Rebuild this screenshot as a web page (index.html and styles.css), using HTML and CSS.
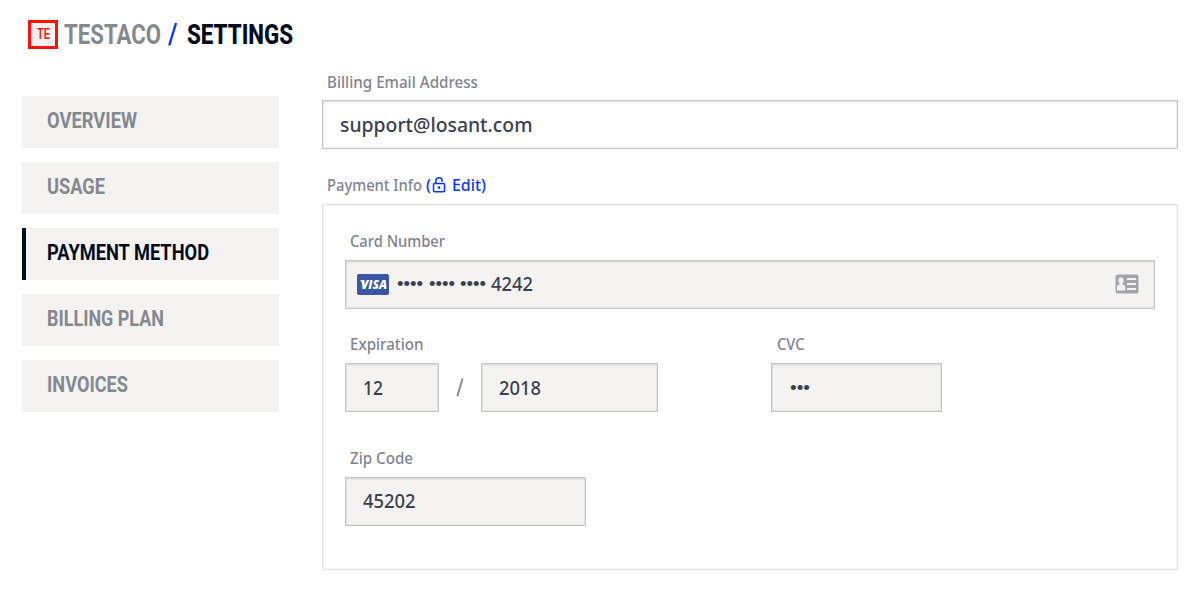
FILE: index.html
```html
<!DOCTYPE html>
<html lang="en">
<head>
<meta charset="utf-8">
<title>Testaco / Settings</title>
<link rel="stylesheet" href="styles.css">
</head>
<body>
<header class="title">
  <span class="logo"><span class="fit" data-w="13">TE</span></span>
  <span class="org"><span class="fit" data-w="97">TESTACO</span></span>
  <svg class="slash" width="10" height="26" viewBox="0 0 10 26"><path d="M1.2 24.5L8 2" stroke="#0a36ff" stroke-width="2.4"/></svg>
  <span class="page"><span class="fit" data-w="106">SETTINGS</span></span>
</header>
<div class="layout">
  <nav class="menu">
    <a class="item"><span class="fit" data-w="90">OVERVIEW</span></a>
    <a class="item"><span class="fit" data-w="58">USAGE</span></a>
    <a class="item active"><span class="fit" data-w="162">PAYMENT METHOD</span></a>
    <a class="item"><span class="fit" data-w="117">BILLING PLAN</span></a>
    <a class="item"><span class="fit" data-w="81">INVOICES</span></a>
  </nav>
  <main class="form">
    <div class="label"><span class="fit" data-w="151">Billing Email Address</span></div>
    <div class="input email"><span class="fit" data-w="192.5">support@losant.com</span></div>
    <div class="label info"><span class="fit" data-w="95">Payment Info</span><span class="edit"><span class="fit" data-w="5">(</span><svg class="lock" width="14" height="16" viewBox="0 0 14 16" fill="none" stroke="#0a36ff" stroke-width="1.5"><rect x="1.5" y="6.5" width="11" height="8.3" rx="1"/><path d="M3.8 6.5V4a3.2 3.2 0 0 1 6.4 0v.8"/><circle cx="7" cy="10.6" r="1.3" fill="#0a36ff" stroke="none"/></svg><span class="fit" data-w="34">Edit)</span></span></div>
    <section class="panel">
      <div class="label"><span class="fit" data-w="95">Card Number</span></div>
      <div class="input off card">
        <svg class="visa" width="32" height="21" viewBox="0 0 32 21"><rect width="32" height="21" rx="2" fill="#3957a5"/><path d="M3 6.2h3.2l1 1.2.3 4.6z" fill="#fff"/><text x="4" y="15.3" textLength="26" lengthAdjust="spacingAndGlyphs" class="visa-text">VISA</text></svg>
        <span class="dots"><span class="fit" data-w="26">••••</span><span class="fit" data-w="26">••••</span><span class="fit" data-w="26">••••</span></span>
        <span class="fit" data-w="42">4242</span>
        <svg class="id" width="24" height="20" viewBox="0 0 24 20"><rect x=".5" y=".5" width="23" height="19" rx="2.5" fill="#a1a5ab"/><g fill="#f4f3f1"><ellipse cx="6.1" cy="6.6" rx="2.6" ry="3.1"/><path d="M4.8 8h2.6v2.2c1.7.5 2.8 1.4 2.8 3v3.3H2v-3.3c0-1.6 1.1-2.5 2.8-3z"/><rect x="12" y="4" width="9" height="2"/><rect x="12" y="9" width="9" height="2"/><rect x="12" y="14" width="9" height="2"/></g></svg>
      </div>
      <div class="row">
        <div class="expiration">
          <div class="label"><span class="fit" data-w="73.5">Expiration</span></div>
          <div class="pair">
            <div class="input off month"><span class="fit" data-w="20">12</span></div>
            <svg width="8" height="22" viewBox="0 0 8 22"><path d="M1.3 19.3L6.6 1.4" stroke="#7f858e" stroke-width="1.8"/></svg>
            <div class="input off year"><span class="fit" data-w="42">2018</span></div>
          </div>
        </div>
        <div>
          <div class="label cvc-label"><span class="fit" data-w="27.5">CVC</span></div>
          <div class="input off cvc"><span class="bullets"><span class="fit" data-w="20">•••</span></span></div>
        </div>
      </div>
      <div class="label zip-label"><span class="fit" data-w="63">Zip Code</span></div>
      <div class="input off zip"><span class="fit" data-w="52.5">45202</span></div>
    </section>
  </main>
</div>
<script src="fit.js"></script>
</body>
</html>
```
FILE: styles.css
```css
* { box-sizing: border-box; }
body {
  margin: 0;
  height: 612px;
  background: #fff;
  color: #3a404c;
  font-family: "Noto Sans", sans-serif;
  overflow: hidden;
}
.fit {
  display: inline-block;
  white-space: nowrap;
  transform-origin: 0 50%;
}
svg { display: block; flex: none; }
.title {
  display: flex;
  align-items: center;
  height: 68px;
  padding-left: 28px;
  font: 700 27px/34px Roboto, sans-serif;
  color: #84888f;
}
.org, .page { padding-top: 1px; }
.logo {
  display: flex;
  align-items: center;
  justify-content: center;
  width: 30px;
  height: 29px;
  margin-right: 6px;
  border: 3px solid #ff1208;
  background: #f1f1f1;
  color: #ff1208;
  font-size: 14px;
  font-weight: 600;
}
.slash { margin: 0 9px 0 7px; }
.page { color: #020c1e; font-weight: 800; }
.layout { display: flex; gap: 43px; padding-left: 22px; }
.menu {
  display: flex;
  flex-direction: column;
  gap: 14px;
  width: 257px;
  padding-top: 28px;
}
.item {
  height: 52px;
  padding: 10px 0 0 25px;
  background: #f4f3f1;
  color: #84888f;
  font: 700 22px/30px Roboto, sans-serif;
}
.active {
  padding-left: 21px;
  border-left: 4px solid #020c1e;
  color: #020c1e;
}
.form { width: 856px; }
.label {
  display: flex;
  height: 24px;
  padding-left: 5px;
  color: #7f858e;
  font-size: 15.5px;
  font-weight: 500;
  line-height: 24px;
}
.form > .label { padding-top: 2px; height: 32px; }
.edit { display: flex; align-items: center; height: 24px; margin-left: 4px; color: #0a36ff; }
.lock { margin: 0 6px 1px 1px; }
.input {
  display: flex;
  align-items: center;
  height: 49px;
  padding-left: 17px;
  border: 1px solid #c3c4c5;
  box-shadow: inset 0 0 0 1px rgba(195, 196, 197, .25), inset 0 2px 2px rgba(0, 0, 0, .06);
  font-size: 19.3px;
  font-weight: 500;
  line-height: 26px;
}
.off { background: #f4f3f1; }
.form > .info { height: 55px; padding-top: 24px; }
.panel {
  height: 366px;
  padding: 24px 22px 0;
  border: 1px solid #dfe0e2;
  box-shadow: inset 0 0 0 1px #f6f6f7;
}
.panel > .label { height: 31px; }
.card { padding: 0 15px 2px 11px; }
.visa { margin-top: 1px; }
.visa-text { fill: #fff; font: italic 800 13px "Open Sans", sans-serif; }
.dots { display: flex; gap: 5.5px; margin: 0 5px 0 8px; }
.dots, .bullets { font-family: "Liberation Sans", sans-serif; font-size: 18px; }
.id { margin-left: auto; }
.row { display: flex; padding-top: 23px; }
.row .label { height: 31px; }
.row .cvc-label { padding-left: 6px; }
.expiration { width: 426px; }
.pair { display: flex; align-items: center; gap: 17px; }
.month { width: 94px; }
.year { width: 177px; }
.cvc { width: 171px; padding-left: 18px; }
.panel > .zip-label { margin-top: 34px; height: 31px; }
.zip { width: 241px; padding-bottom: 2px; }
```
FILE: fit.js
```js
// Condense each text run to the width given in data-w.
document.querySelectorAll('.fit').forEach(function (el) {
  var target = parseFloat(el.dataset.w);
  var natural = el.getBoundingClientRect().width;
  el.style.transform = 'scaleX(' + target / natural + ')';
  el.style.marginRight = (target - natural) + 'px';
});
```
